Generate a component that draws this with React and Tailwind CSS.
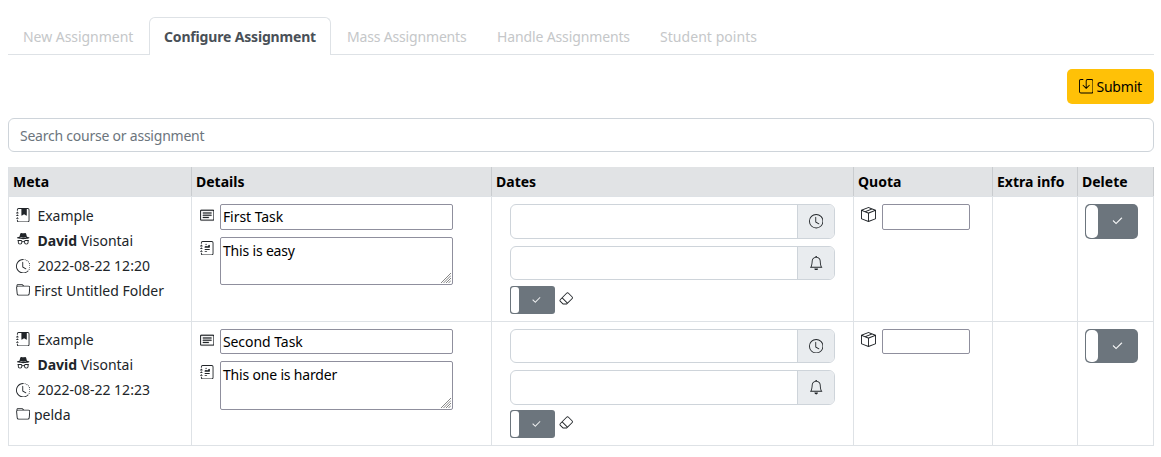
import { BsJournalBookmarkFill, BsIncognito, BsClockHistory, BsFolder, BsCardText, BsJournalRichtext, BsClock, BsBell, BsEraser, BsBoxSeam, BsSave, BsCheck2 } from "react-icons/bs";

const columns = "grid grid-cols-[183px_300px_362px_139px_85px_76px]";
const cell = "border-r border-[#dee2e6] pt-[7px]";

function Head({ children }) {
  return <div className="border-r border-[#c9cccf] pl-1 pt-[4px] leading-[22px] font-bold text-black">{children}</div>;
}

function Toggle({ small, className = "" }) {
  return (
    <div className={`flex bg-[#6c757d] p-px ${small ? "h-[28px] w-[45px] rounded-[3px]" : "w-[53px] rounded-[5px]"} ${className}`}>
      <div className={`bg-white ${small ? "w-[8px] rounded-[3px]" : "w-[12px] rounded-[5px]"}`} />
      <div className="flex flex-1 items-center justify-center pr-px text-white">
        <BsCheck2 size={small ? 10.5 : 12.5} stroke="currentColor" strokeWidth={0.5} />
      </div>
    </div>
  );
}

function DateInput({ icon: Icon, height }) {
  return (
    <div className={`flex w-[325px] overflow-hidden rounded-md border border-[#ced4da] ${height}`}>
      <div className="flex-1" />
      <div className="flex w-[37px] items-center justify-center border-l border-[#ced4da] bg-[#e9ecef]"><Icon size={14.4} /></div>
    </div>
  );
}

function Grip() {
  return (
    <svg className="absolute right-px bottom-px" width="10" height="10" viewBox="0 0 10 10" fill="none" stroke="#777" strokeWidth="0.9">
      <path d="M0 10 10 0M2.500 10 10 2.500M5 10l5-5M7.500 10 10 7.500" />
    </svg>
  );
}

function MetaLine({ icon: Icon, iconClass, children }) {
  return (
    <div className="flex h-[25px]">
      <Icon size={14.4} className={`shrink-0 ${iconClass}`} />
      <span>{children}</span>
    </div>
  );
}

function Row({ date, folder, title, note, noteClass, first }) {
  return (
    <div className={`${columns} border-b border-[#dee2e6] ${first ? "h-[125px]" : "h-[124px]"}`}>
      <div className={`border-r border-[#dee2e6] pl-[7px] leading-[25px] ${first ? "pt-[6px]" : "pt-[5px]"}`}>
        <MetaLine icon={BsJournalBookmarkFill} iconClass="mt-[5px] mr-[7px]">Example</MetaLine>
        <MetaLine icon={BsIncognito} iconClass="mt-[4px] mr-[7px]"><b>David</b> Visontai</MetaLine>
        <MetaLine icon={BsClockHistory} iconClass="mt-[6px] mr-[7px]">{date}</MetaLine>
        <MetaLine icon={BsFolder} iconClass="mt-[5px] mr-[3.600px]">{folder}</MetaLine>
      </div>
      <div className={`${cell} pl-[7.500px] text-black`}>
        <div className="flex">
          <BsCardText size={14.4} stroke="currentColor" strokeWidth={0.3} className="mt-[4px] mr-[6px] shrink-0 text-[#212529]" />
          <div className={`w-[233px] rounded-[2px] border border-[#8f8f9d] pl-[2px] leading-[24px] tracking-[-0.05px] ${first ? "h-[26px]" : "h-[25px]"}`}>{title}</div>
        </div>
        <div className="mt-[7px] flex">
          <BsJournalRichtext size={14.4} className="mt-[4px] mr-[6px] shrink-0 text-[#212529]" />
          <div className={`relative w-[233px] rounded-[2px] border border-[#8f8f9d] pl-[2px] leading-[26px] ${first ? "h-[48px]" : "h-[49px]"} ${noteClass}`}>{note}<Grip /></div>
        </div>
      </div>
      <div className={`${cell} pl-[18px]`}>
        <DateInput icon={BsClock} height={first ? "h-[35px]" : "h-[34px]"} />
        <div className="mt-[7px]"><DateInput icon={BsBell} height={first ? "h-[34px]" : "h-[35px]"} /></div>
        <div className={`flex gap-[3.500px] ${first ? "mt-[6px]" : "mt-[5px]"}`}><Toggle small /><BsEraser size={14.4} className="mt-[5px]" /></div>
      </div>
      <div className={`${cell} flex pl-[7px]`}>
        <BsBoxSeam size={15} className="mt-[3px] mr-[6px]" />
        <div className={`w-[88px] rounded-[2px] border border-[#8f8f9d] ${first ? "h-[26px]" : "h-[25px]"}`} />
      </div>
      <div className={cell} />
      <div className={`${cell} pl-[7px]`}><Toggle className={first ? "h-[35px]" : "h-[34px]"} /></div>
    </div>
  );
}

export default function App() {
  return (
    <div className="h-[457px] w-[1161px] bg-white pl-[8px] pt-[17px] font-['Noto_Sans',sans-serif] text-[14px] text-[#212529]">
      <div className="flex h-[38px] w-[1146px] text-[#c5c7c9] leading-[39px]">
        <div className="w-[141px] border-b border-[#dee2e6] pl-[15px] tracking-[-0.04px]">New Assignment</div>
        <div className="w-[182px] rounded-t-md border border-b-0 border-[#dee2e6] pl-[14px] leading-[37px] font-bold tracking-[-0.17px] text-[#495057]">Configure Assignment</div>
        <div className="w-[150px] border-b border-[#dee2e6] pl-[16px] tracking-[-0.17px]">Mass Assignments</div>
        <div className="w-[163px] border-b border-[#dee2e6] pl-[16px] tracking-[-0.13px]">Handle Assignments</div>
        <div className="flex-1 border-b border-[#dee2e6] pl-[16px] tracking-[0.05px]">Student points</div>
      </div>
      <div className="mt-[14px] flex w-[1146px] justify-end">
        <div className="flex h-[35px] w-[87px] items-center gap-[3.500px] rounded-[5px] bg-[#ffc107] pl-[11.500px] tracking-[-0.2px] text-black"><BsSave size={14.4} />Submit</div>
      </div>
      <div className="mt-[14px] h-[34px] w-[1146px] rounded-md border border-[#ced4da] pl-[11px] leading-[34px] tracking-[-0.23px] text-[#6c757d]">Search course or assignment</div>
      <div className="mt-[15px] w-[1146px] border-l border-[#dee2e6]">
        <div className={`${columns} h-[30px] border-b border-[#dee2e6] bg-[#e1e3e5]`}>
          <Head>Meta</Head><Head>Details</Head><Head>Dates</Head><Head>Quota</Head><Head>Extra info</Head><Head>Delete</Head>
        </div>
        <Row date="2022-08-22 12:20" folder="First Untitled Folder" title="First Task" note="This is easy" noteClass="tracking-[-0.17px]" first />
        <Row date="2022-08-22 12:23" folder="pelda" title="Second Task" note="This one is harder" noteClass="tracking-[-0.17px]" />
      </div>
    </div>
  );
}
